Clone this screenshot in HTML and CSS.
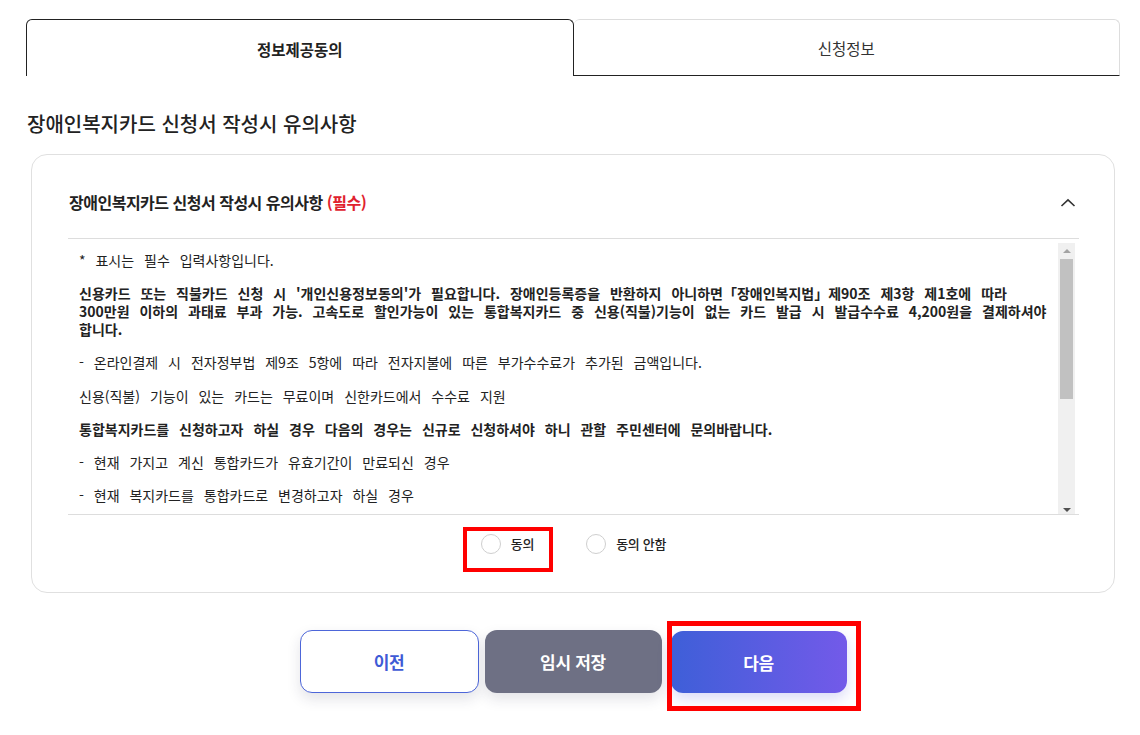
FILE: index.html
```html
<!DOCTYPE html>
<html lang="ko">
<head>
<meta charset="utf-8">
<title>장애인복지카드 신청</title>
<link rel="stylesheet" href="styles.css">
</head>
<body>
<div class="page">
  <div class="tabs">
    <div class="tab tab-active">정보제공동의</div>
    <div class="tab tab-idle">신청정보</div>
  </div>

  <h2 class="section-title">장애인복지카드 신청서 작성시 유의사항</h2>

  <div class="card">
    <div class="card-head">
      <span class="card-title">장애인복지카드 신청서 작성시 유의사항 <em class="req">(필수)</em></span>
      <svg class="chev" width="16" height="16" viewBox="0 0 16 16"><path d="M1.5 11 L8 4.8 L14.5 11" fill="none" stroke="#333" stroke-width="1.6"/></svg>
    </div>
    <div class="terms">
      <div class="terms-text">
        <p>* 표시는 필수 입력사항입니다.</p>
        <p class="b">신용카드 또는 직불카드 신청 시 '개인신용정보동의'가 필요합니다. 장애인등록증을 반환하지 아니하면「장애인복지법」제90조 제3항 제1호에 따라<br>300만원 이하의 과태료 부과 가능. 고속도로 할인가능이 있는 통합복지카드 중 신용(직불)기능이 없는 카드 발급 시 발급수수료 4,200원을 결제하셔야<br>합니다.</p>
        <p>- 온라인결제 시 전자정부법 제9조 5항에 따라 전자지불에 따른 부가수수료가 추가된 금액입니다.</p>
        <p>신용(직불) 기능이 있는 카드는 무료이며 신한카드에서 수수료 지원</p>
        <p class="b">통합복지카드를 신청하고자 하실 경우 다음의 경우는 신규로 신청하셔야 하니 관할 주민센터에 문의바랍니다.</p>
        <p>- 현재 가지고 계신 통합카드가 유효기간이 만료되신 경우</p>
        <p>- 현재 복지카드를 통합카드로 변경하고자 하실 경우</p>
      </div>
      <div class="scrollbar">
        <span class="arrow-up"></span>
        <span class="thumb"></span>
        <span class="track-rest"></span>
        <span class="arrow-down"></span>
      </div>
    </div>
    <div class="radios">
      <label class="radio"><span class="dot"></span>동의</label>
      <label class="radio"><span class="dot"></span>동의 안함</label>
    </div>
  </div>

  <div class="actions">
    <button class="btn btn-prev">이전</button>
    <button class="btn btn-save">임시 저장</button>
    <button class="btn btn-next">다음</button>
  </div>

  <div class="mark mark-agree"></div>
  <div class="mark mark-next"></div>
</div>
</body>
</html>
```
FILE: styles.css
```css
* { box-sizing: border-box; }
html, body { margin: 0; padding: 0; background: #fff; }
body {
  font-family: "Noto Sans CJK KR", "Noto Sans", sans-serif;
  color: #222;
}
.page {
  position: relative;
  width: 1140px;
  height: 735px;
  padding: 19px 20px 0 26px;
}

/* tabs */
.tabs { display: flex; height: 57px; }
.tab {
  flex: 1;
  display: flex;
  align-items: center;
  justify-content: center;
  font-size: 15.5px;
  letter-spacing: 0;
  line-height: 20px;
  border-radius: 6px 6px 0 0;
}
.tab-active {
  border: 1px solid #222;
  border-bottom: none;
  font-weight: 700;
  color: #222;
  padding-top: 2px;
}
.tab-idle {
  border-top: 1px solid #ddd;
  border-right: 1px solid #ddd;
  border-bottom: 1px solid #222;
  font-weight: 400;
  color: #333;
  padding-top: 1px;
}

.section-title {
  margin: 35px 0 0 1px;
  font-size: 20px;
  font-weight: 500;
  letter-spacing: 0;
  line-height: 26px;
  color: #222;
}

/* card */
.card {
  margin: 17px 5px 0 5px;
  border: 1px solid #e0e0e0;
  border-radius: 16px;
  padding: 0 35px 37px 36px;
  height: 439px;
}
.card-head {
  display: flex;
  align-items: center;
  justify-content: space-between;
  padding: 37px 3px 25px 1px;
  line-height: 21px;
}
.card-title {
  font-size: 16px;
  font-weight: 700;
  letter-spacing: -0.5px;
  color: #222;
}
.req { font-style: normal; color: #e0222e; }
.chev { display: block; }

.terms {
  display: flex;
  height: 277px;
  border-top: 1px solid #ddd;
  border-bottom: 1px solid #ddd;
}
.terms-text {
  flex: 1;
  overflow: hidden;
  padding: 12px 0 0 11px;
  font-size: 14px;
  line-height: 18px;
  word-spacing: 6px;
  color: #222;
  white-space: nowrap;
}
.terms-text p { margin: 0 0 15.2px; }
.terms-text .b { font-weight: 700; }

.scrollbar {
  width: 17px;
  margin: 4px 4px 0 0;
  background: #f0f0f0;
  display: flex;
  flex-direction: column;
  align-items: center;
}
.arrow-up {
  width: 0; height: 0;
  margin: 6px 0 6px;
  border-left: 4px solid transparent;
  border-right: 4px solid transparent;
  border-bottom: 4px solid #a3a3a3;
}
.thumb {
  width: 13px;
  height: 140px;
  background: #c1c1c1;
}
.track-rest { flex: 1; }
.arrow-down {
  width: 0; height: 0;
  margin: 0 0 2px;
  border-left: 4px solid transparent;
  border-right: 4px solid transparent;
  border-top: 4px solid #505050;
}

.radios {
  display: flex;
  justify-content: center;
  gap: 52px;
  margin-top: 19px;
}
.radio {
  display: flex;
  align-items: center;
  gap: 10px;
  font-size: 13px;
  font-weight: 500;
  letter-spacing: -0.3px;
  color: #222;
  line-height: 20px;
}
.dot {
  width: 20px;
  height: 20px;
  border: 1px solid #cfcfcf;
  border-radius: 50%;
  background: #fff;
}

/* buttons */
.actions {
  display: flex;
  justify-content: center;
  gap: 6px;
  margin-top: 37px;
}
.btn {
  width: 179px;
  height: 63px;
  border-radius: 12px;
  font-family: "Noto Sans CJK KR", "Noto Sans", sans-serif;
  font-size: 17px;
  font-weight: 700;
  letter-spacing: -0.3px;
  border: none;
  box-shadow: 0 6px 14px rgba(40, 40, 70, 0.13);
}
.btn-prev {
  background: #fff;
  border: 1px solid #4d66d9;
  color: #3f5bd6;
}
.btn-save {
  width: 177px;
  background: #6e7084;
  color: #fff;
}
.btn-next {
  width: 176px;
  height: 62px;
  margin-left: 3px;
  margin-top: 1px;
  background: linear-gradient(90deg, #3e5fd8 0%, #735ae9 100%);
  color: #fff;
  box-shadow: 0 6px 14px rgba(90, 90, 220, 0.22);
}

/* red annotation boxes over the content */
.mark {
  position: absolute;
  border: 4px solid #ff0000;
  pointer-events: none;
}
.mark-agree { left: 463px; top: 527px; width: 90px; height: 45px; }
.mark-next { left: 667px; top: 621px; width: 194px; height: 90px; border-width: 5px; }
```
